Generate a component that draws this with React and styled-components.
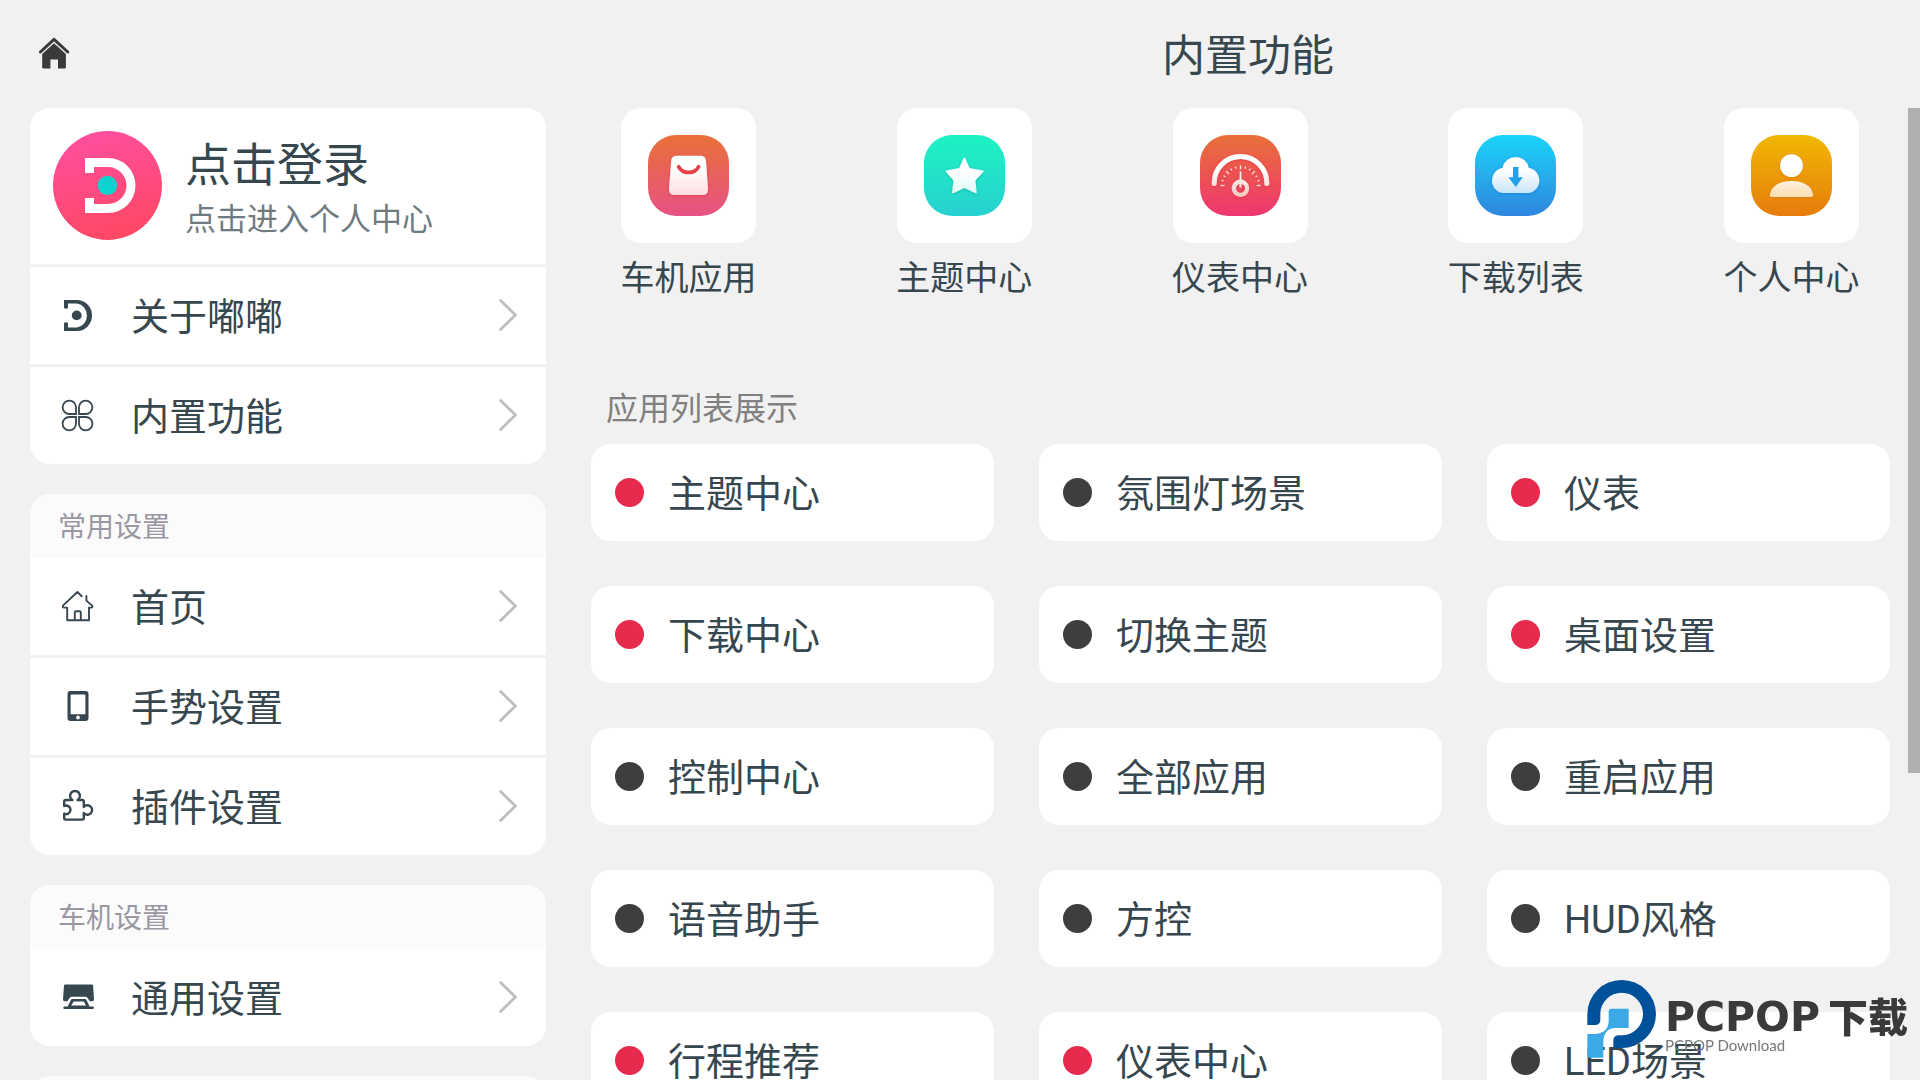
import React from 'react'
import styled, { createGlobalStyle } from 'styled-components'

const GlobalStyle = createGlobalStyle`
  * {
    box-sizing: border-box;
  }

  body {
    margin: 0;
    background: #f1f1f1;
    color: #37474f;
    font-family: "Noto Sans", "Noto Sans CJK SC", sans-serif;
    overflow: hidden;
  }

  button {
    border: 0;
    padding: 0;
    background: none;
    color: inherit;
    font: inherit;
    text-align: left;
    cursor: pointer;
  }

  svg {
    display: block;
    flex: none;
  }
`

const tickAngles = [ 0, 15, 30, 45, 60, 75, 90, 105, 120, 135, 150, 165, 180 ]

const HomeSolidIcon = () => (
  <svg width="32" height="34" viewBox="0 0 32 34" fill="#3a3a3a">
    <path d="M2.4 15 16 2.4 29.8 15" fill="none" stroke="#3a3a3a" strokeWidth="3" strokeLinecap="round" strokeLinejoin="round" />
    <path d="M16 6.2 27.9 17V30.4a1 1 0 0 1-1 1H20V22.6H12.4V31.4H5.2a1 1 0 0 1-1-1V17Z" />
  </svg>
)

const AvatarIcon = () => (
  <svg width="109" height="109" viewBox="0 0 109 109">
    <defs>
      <linearGradient id="avatar" x1="0.35" y1="0" x2="0.6" y2="1">
        <stop offset="0" stopColor="#ff4f9f" />
        <stop offset="1" stopColor="#ff4763" />
      </linearGradient>
    </defs>
    <circle cx="54.5" cy="54.5" r="54.5" fill="url(#avatar)" />
    <path d="M32 27H55A27.5 27.5 0 0 1 55 82H32V67H41V73H55A18.5 18.5 0 0 0 55 36H41V42H32Z" fill="#fff" />
    <circle cx="54.4" cy="54.4" r="9.7" fill="#0dd3cf" />
  </svg>
)

const ChevronIcon = () => (
  <svg width="18" height="33" viewBox="0 0 18 33" fill="none" stroke="#bebebe" strokeWidth="2.8" strokeLinecap="round" strokeLinejoin="round">
    <path d="M1.6 1.5 16.4 16 1.6 30.5" />
  </svg>
)

const rowIcons = {
  about: (
    <g fill="#37474f">
      <path d="M3 1H16A15 15.5 0 0 1 16 32H3V24Q5 22.5 7 24V28.4H16A11.4 12 0 0 0 16 4.6H7V9Q5 10.4 3 9Z" />
      <circle cx="15.7" cy="16.4" r="4.9" />
    </g>
  ),
  clover: (
    <g fill="none" stroke="#37474f" strokeWidth="1.8">
      <path d="M15 15H8.4A6.7 6.7 0 1 1 15 8.4Z" />
      <path d="M18 15H24.6A6.7 6.7 0 1 0 18 8.4Z" />
      <path d="M15 18H8.4A6.7 6.7 0 1 0 15 24.6Z" />
      <path d="M18 18H24.6A6.7 6.7 0 1 1 18 24.6Z" />
    </g>
  ),
  home: (
    <g fill="none" stroke="#37474f" strokeWidth="1.9" strokeLinecap="round" strokeLinejoin="round">
      <path d="M20.8 6.2 16.4 2 1.9 15.6Q1.2 17.4 3 17.6H6.2V30.2H28V17.6H30.4Q32.2 17 30.8 15.4L25.4 10.6V6" />
      <path d="M13.8 30V22.4Q13.8 21.2 15 21.2H18.6Q19.8 21.2 19.8 22.4V30" />
    </g>
  ),
  phone: (
    <path
      fill="#37474f"
      fillRule="evenodd"
      d="M9.5 1H24.5A3 3 0 0 1 27.5 4V28A3 3 0 0 1 24.5 31H9.5A3 3 0 0 1 6.5 28V4A3 3 0 0 1 9.5 1ZM10.6 4.6Q9.6 4.6 9.6 5.6V24.2H24.4V5.6Q24.4 4.6 23.4 4.6ZM17 25.6A1.9 1.9 0 1 0 17 29.4 1.9 1.9 0 1 0 17 25.6Z"
    />
  ),
  puzzle: (
    <path
      fill="none"
      stroke="#37474f"
      strokeWidth="2.4"
      strokeLinejoin="round"
      d="M3.2 15.6V11.6Q3.2 10 4.8 10H11.4A4.9 4.9 0 1 1 16.6 10H21.2Q22.8 10 22.8 11.6V17A4.7 4.7 0 1 1 22.8 23V28Q22.8 29.6 21.2 29.6H4.8Q3.2 29.6 3.2 28V23.6A4.3 4.3 0 1 0 3.2 16Z"
    />
  ),
  console: (
    <g fill="#37474f">
      <path d="M4.4 3.5H31Q32 3.5 32.1 4.6L33 18.6Q33 20.2 31.4 20.2H28.8L26.6 17Q25.8 15.8 24.2 15.8H11Q9.4 15.8 8.6 17L6.4 20.2H3.6Q2 20.2 2 18.6L3 4.6Q3.2 3.5 4.4 3.5Z" />
      <path fillRule="evenodd" d="M11.4 18H23.8Q25 18 25.6 19.2L28.6 25.4H32Q33 25.6 33 26.7T32 28H3.2Q2.2 27.8 2.2 26.7T3.2 25.4H6.6L9.8 19.2Q10.4 18 11.4 18ZM12.6 20.4 10.2 24.6H25L22.8 20.4Z" />
    </g>
  ),
}

const tileIcons = {
  bag: {
    from: '#e97038',
    to: '#e75284',
    shadow: '#e2284f',
    fade: '#fbdadd',
    art: (
      <>
        <path d="M29 20.7H52.5Q57.6 20.7 58 25.8L60 54Q60.2 60 54.6 60H26.4Q20.8 60 21 54L23.2 25.8Q23.6 20.7 29 20.7Z" />
        <path d="M30.6 31.6Q33.4 37.4 40.6 37.4T50.6 31.6" fill="none" stroke="#e8414c" strokeWidth="3.6" strokeLinecap="round" />
      </>
    ),
  },
  star: {
    from: '#1df3c2',
    to: '#28d0d0',
    shadow: '#14ab9c',
    fade: '#dcfaf5',
    art: (
      <path d="M40.4 23.6 45 34 58.6 36.4 50.4 45.2 51.8 57.4 40.4 52 29 57.4 30.4 45.2 22.6 36.4 35.8 34Z" strokeWidth="1.8" strokeLinejoin="round" stroke="url(#glyph-star)" />
    ),
  },
  gauge: {
    from: '#e97038',
    to: '#ef3670',
    shadow: '#e2284f',
    fade: '#f5c8c0',
    art: (
      <>
        <path d="M14.2 48.4V47.8A26.2 26.2 0 0 1 66.8 47.8V48.4" fill="none" stroke="url(#glyph-gauge)" strokeWidth="5" strokeLinecap="round" />
        {tickAngles.map(angle => (
          <path
            key={angle}
            d={angle % 45 === 0 ? 'M20.4 50.5H24.4' : 'M21 50.5H23'}
            transform={`rotate(${angle} 40.5 50.5)`}
            stroke="#ffe2da"
            strokeWidth="1.3"
          />
        ))}
        <path fillRule="evenodd" d="M40.5 44.6A8.7 8.7 0 1 1 40.4 44.6ZM40.5 48.8A4.5 4.5 0 1 0 40.6 48.8Z" />
        <path d="M39.4 52.5 39.8 36.6H41.2L41.6 52.5Z" />
      </>
    ),
  },
  cloud: {
    from: '#1bd4f9',
    to: '#2f86df',
    shadow: '#1b7fd8',
    fade: '#bfe0f7',
    art: (
      <>
        <path d="M28.5 58A12.6 12.6 0 0 1 27.6 33 13.3 13.3 0 0 1 53.8 33 12.6 12.6 0 0 1 52.7 58Z" />
        <path d="M38 32H43.4V42.3H47.8L40.7 52 33.4 42.3H38Z" fill="#22a0ec" />
      </>
    ),
  },
  user: {
    from: '#f0b803',
    to: '#e77c0d',
    shadow: '#d97808',
    fade: '#fbdcb0',
    art: (
      <>
        <circle cx="40.5" cy="30.6" r="11.4" />
        <path d="M20.6 62Q18.6 62 19 59.4C20.4 50.6 29 46 40.5 46S60.6 50.6 62 59.4Q62.4 62 60.4 62Z" />
      </>
    ),
  },
}

const TileIcon = ({ name }) => {
  const { from, to, shadow, fade, art } = tileIcons[name]

  return (
    <svg width="81" height="81" viewBox="0 0 81 81">
      <defs>
        <linearGradient id={`back-${name}`} x1="0" y1="0" x2="0" y2="1">
          <stop offset="0" stopColor={from} />
          <stop offset="1" stopColor={to} />
        </linearGradient>
        <linearGradient id={`glyph-${name}`} gradientUnits="userSpaceOnUse" x1="0" y1="20" x2="0" y2="62">
          <stop offset="0.35" stopColor="#fff" />
          <stop offset="1" stopColor={fade} />
        </linearGradient>
        <filter id={`shadow-${name}`} x="-30%" y="-30%" width="160%" height="160%">
          <feDropShadow dx="0" dy="1" stdDeviation="1.4" floodColor={shadow} floodOpacity="0.7" />
        </filter>
      </defs>
      <rect width="81" height="81" rx="28" fill={`url(#back-${name})`} />
      <g fill={`url(#glyph-${name})`} filter={`url(#shadow-${name})`}>{art}</g>
    </svg>
  )
}

const WatermarkLogo = () => (
  <svg width="69" height="78" viewBox="78 120 207 234">
    <path d="M79 255V222A103 102 0 1 1 182 324H157V302Q157 287 172 286H182A64 64 0 1 0 118 222V241Q117 255 103 255Z" fill="#00509a" />
    <path d="M152 206H203V264H160Q128 268 127 305V353H79V282H100Q140 280 143 245V215Q143 206 152 206Z" fill="#3ba9e5" />
  </svg>
)

const groups = [
  {
    profile: true,
    rows: [
      { icon: 'about', label: '关于嘟嘟' },
      { icon: 'clover', label: '内置功能' },
    ],
  },
  {
    title: '常用设置',
    rows: [
      { icon: 'home', label: '首页' },
      { icon: 'phone', label: '手势设置' },
      { icon: 'puzzle', label: '插件设置' },
    ],
  },
  {
    title: '车机设置',
    rows: [
      { icon: 'console', label: '通用设置' },
    ],
  },
]

const tiles = [
  { icon: 'bag', label: '车机应用' },
  { icon: 'star', label: '主题中心' },
  { icon: 'gauge', label: '仪表中心' },
  { icon: 'cloud', label: '下载列表' },
  { icon: 'user', label: '个人中心' },
]

const apps = [
  { label: '主题中心', active: true },
  { label: '氛围灯场景' },
  { label: '仪表', active: true },
  { label: '下载中心', active: true },
  { label: '切换主题' },
  { label: '桌面设置', active: true },
  { label: '控制中心' },
  { label: '全部应用' },
  { label: '重启应用' },
  { label: '语音助手' },
  { label: '方控' },
  { label: 'HUD风格' },
  { label: '行程推荐', active: true },
  { label: '仪表中心', active: true },
  { label: 'LED场景' },
]

const Group = ({ title, profile, rows }) => (
  <GroupCard>
    {title && <GroupTitle>{title}</GroupTitle>}
    {profile && (
      <Profile>
        <AvatarIcon />
        <span>
          <ProfileName>点击登录</ProfileName>
          <ProfileHint>点击进入个人中心</ProfileHint>
        </span>
      </Profile>
    )}
    {rows.map(({ icon, label }) => (
      <Row key={label}>
        <svg width="33" height="33" viewBox="0 0 33 33" overflow="visible">{rowIcons[icon]}</svg>
        <RowLabel>{label}</RowLabel>
        <ChevronIcon />
      </Row>
    ))}
  </GroupCard>
)

export default class App extends React.Component {
  render() {
    return (
      <Page>
        <GlobalStyle />
        <Sidebar>
          <TopBar>
            <HomeButton aria-label="首页"><HomeSolidIcon /></HomeButton>
          </TopBar>
          <Groups>
            {groups.map((group, index) => <Group key={index} {...group} />)}
            <GroupCard><GroupTitle /></GroupCard>
          </Groups>
        </Sidebar>
        <Main>
          <TopBar>
            <Title>内置功能</Title>
          </TopBar>
          <Content>
            <Tiles>
              {tiles.map(({ icon, label }) => (
                <Tile key={label}>
                  <TileBox><TileIcon name={icon} /></TileBox>
                  <TileLabel>{label}</TileLabel>
                </Tile>
              ))}
            </Tiles>
            <SectionTitle>应用列表展示</SectionTitle>
            <AppGrid>
              {apps.map(({ label, active }) => (
                <AppCard key={label}>
                  <Dot $active={active} />
                  <AppName>{label}</AppName>
                </AppCard>
              ))}
            </AppGrid>
            <ScrollThumb />
          </Content>
        </Main>
        <Watermark>
          <WatermarkLogo />
          <div>
            <WatermarkName>
              <WatermarkLatin>PCPOP</WatermarkLatin>
              下载
            </WatermarkName>
            <WatermarkHint>PCPOP Download</WatermarkHint>
          </div>
        </Watermark>
      </Page>
    )
  }
}

const Page = styled.div`
  display: grid;
  grid-template-columns: 30% 1fr;
  height: 100vh;
  overflow: hidden;
`

const Sidebar = styled.nav`
  display: flex;
  flex-direction: column;
  min-height: 0;
`

const Main = styled.main`
  display: flex;
  flex-direction: column;
  min-width: 0;
  min-height: 0;
`

const TopBar = styled.header`
  display: flex;
  flex: none;
  align-items: center;
  height: 108px;
`

const HomeButton = styled.button`
  margin-left: 38px;
`

const Title = styled.h1`
  flex: 1;
  margin: 0;
  padding-top: 2px;
  font-size: 43px;
  font-weight: normal;
  line-height: 64px;
  text-align: center;
`

const Groups = styled.div`
  display: flex;
  flex: 1;
  flex-direction: column;
  gap: 30px;
  min-height: 0;
  padding: 0 30px;
  overflow: hidden;
`

const GroupCard = styled.section`
  flex: none;
  border-radius: 20px;
  background: #fff;
  overflow: hidden;
`

const GroupTitle = styled.h2`
  height: 64px;
  margin: 0;
  padding-left: 28px;
  background: #fbfbfb;
  color: #9a97a2;
  font-size: 28px;
  font-weight: normal;
  line-height: 64px;
`

const Profile = styled.button`
  display: flex;
  gap: 23px;
  width: 100%;
  height: 156px;
  padding: 23px 23px 0;
`

const ProfileName = styled.span`
  display: block;
  font-size: 46px;
  line-height: 64px;
`

const ProfileHint = styled.span`
  display: block;
  color: #6f7b81;
  font-size: 31px;
  line-height: 46px;
`

const Row = styled.button`
  display: flex;
  align-items: center;
  width: 100%;
  height: 97px;
  padding: 0 29px 0 31px;

  button + & {
    height: 100px;
    border-top: 3px solid #efeff4;
  }
`

const RowLabel = styled.span`
  flex: 1;
  margin-left: 37px;
  padding-bottom: 2px;
  font-size: 38px;
  line-height: 56px;
`

const Content = styled.div`
  position: relative;
  flex: 1;
  min-height: 0;
  overflow: hidden;
`

const Tiles = styled.div`
  display: flex;
  justify-content: space-between;
  padding: 0 61px 0 45px;
`

const Tile = styled.button`
  display: flex;
  flex-direction: column;
  align-items: center;
  width: 135px;
`

const TileBox = styled.span`
  display: flex;
  align-items: center;
  justify-content: center;
  width: 135px;
  height: 135px;
  border-radius: 20px;
  background: #fff;
`

const TileLabel = styled.span`
  margin-top: 10px;
  font-size: 34px;
  line-height: 48px;
  white-space: nowrap;
`

const SectionTitle = styled.h2`
  margin: 83px 0 12px 30px;
  color: #808080;
  font-size: 32px;
  font-weight: normal;
  line-height: 48px;
`

const AppGrid = styled.div`
  display: grid;
  grid-template-columns: repeat(3, 1fr);
  gap: 45px;
  padding: 0 30px 0 15px;
`

const AppCard = styled.button`
  display: flex;
  align-items: center;
  gap: 24px;
  height: 97px;
  padding: 0 24px;
  border-radius: 20px;
  background: #fff;
`

const AppName = styled.span`
  padding-top: 2px;
  font-family: Roboto, "Noto Sans CJK SC", sans-serif;
  font-size: 38px;
  line-height: 56px;
`

const Dot = styled.span`
  flex: none;
  width: 29px;
  height: 29px;
  border-radius: 50%;
  background: ${props => props.$active ? '#e62b4f' : '#3e3e40'};
`

const ScrollThumb = styled.div`
  position: absolute;
  top: 0;
  right: 0;
  width: 12px;
  height: 68.4%;
  background: #b0b0b0;
`

const Watermark = styled.div`
  position: fixed;
  right: 12px;
  bottom: 22px;
  display: flex;
  gap: 9px;
  pointer-events: none;
`

const WatermarkName = styled.div`
  display: flex;
  align-items: center;
  gap: 8px;
  margin-top: 17px;
  color: #3a3a3a;
  font-size: 40px;
  font-weight: 900;
  line-height: 40px;
`

const WatermarkLatin = styled.span`
  font-family: "DejaVu Sans", sans-serif;
  font-size: 41px;
`

const WatermarkHint = styled.div`
  color: #777;
  font-family: Lato, sans-serif;
  font-size: 15px;
  line-height: 16px;
`
